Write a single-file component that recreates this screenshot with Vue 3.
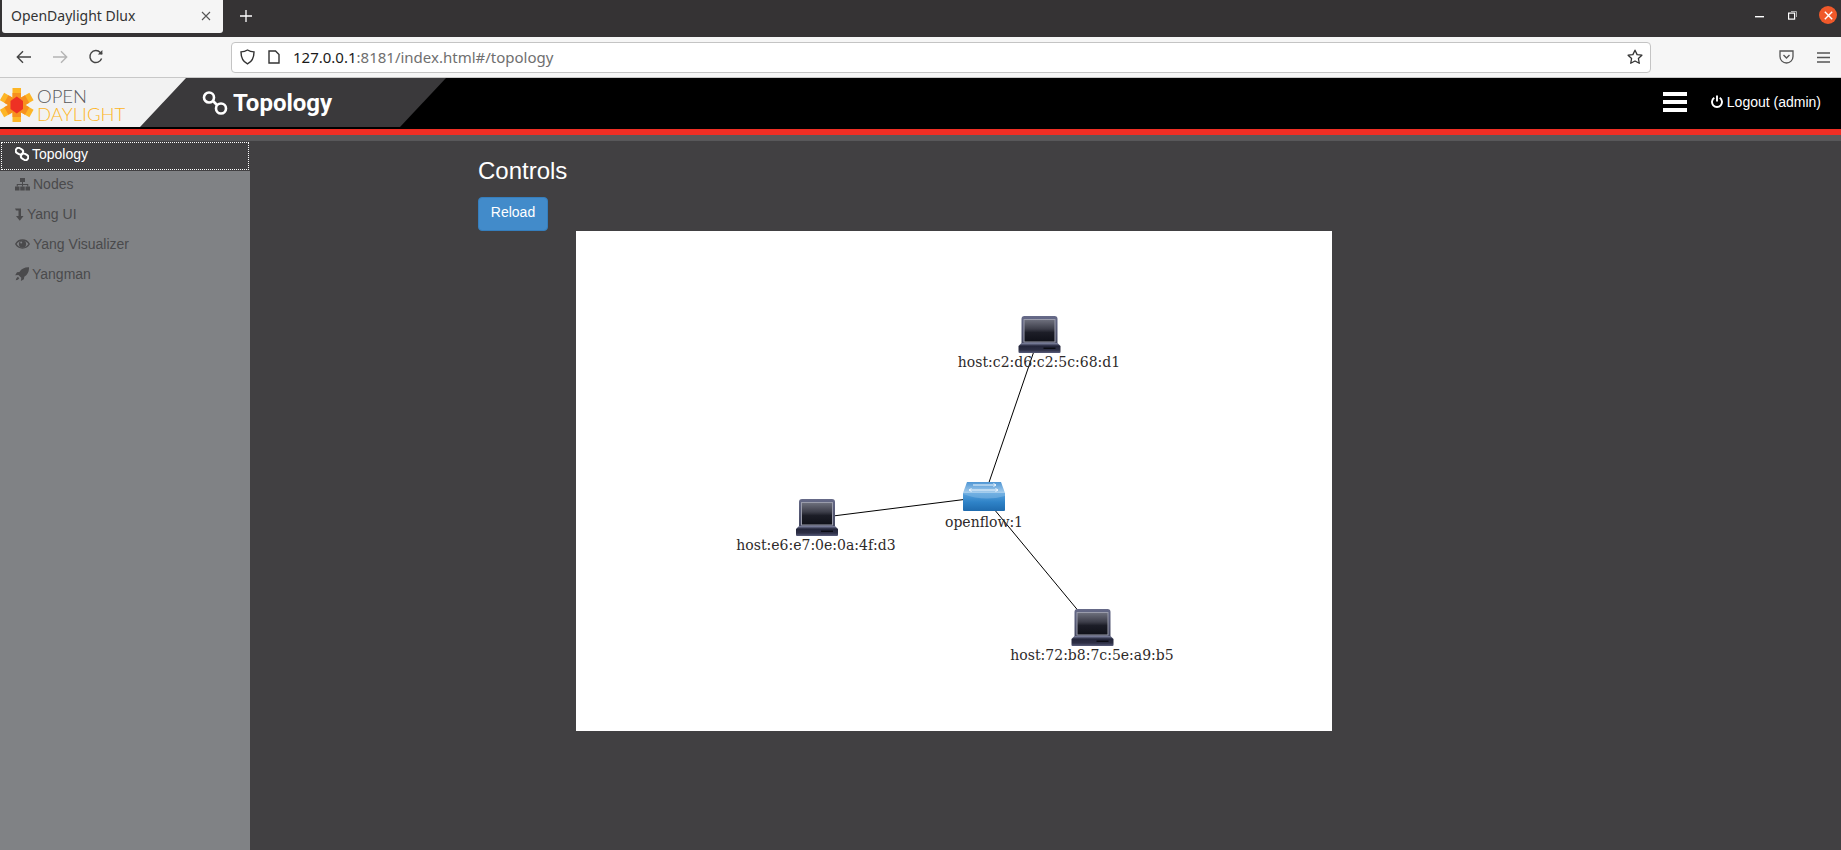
<script setup>
const menu = [
  { label: 'Topology', icon: 'link', w: 14, active: true },
  { label: 'Nodes', icon: 'sitemap', w: 15 },
  { label: 'Yang UI', icon: 'level', w: 9 },
  { label: 'Yang Visualizer', icon: 'eye', w: 15 },
  { label: 'Yangman', icon: 'rocket', w: 14 }
]
const center = { x: 984, y: 497 }
const nodes = [
  { id: 'host:c2:d6:c2:5c:68:d1', x: 463.5, y: 104, lx: 463, ly: 136 },
  { id: 'host:e6:e7:0e:0a:4f:d3', x: 241, y: 287, lx: 240, ly: 319 },
  { id: 'host:72:b8:7c:5e:a9:b5', x: 516.5, y: 397, lx: 516, ly: 429 }
]
const sw = { x: center.x - 576, y: center.y - 231 }
</script>

<template>
  <div class="page">
    <div class="tabbar">
      <div class="tab">
        <span class="tab-title">OpenDaylight Dlux</span>
        <svg class="tab-x" width="10" height="10" viewBox="0 0 10 10"><path d="M1 1l8 8M9 1l-8 8" stroke="#555" stroke-width="1.1"/></svg>
      </div>
      <svg class="new-tab" width="12" height="12" viewBox="0 0 12 12"><path d="M6 0v12M0 6h12" stroke="#fff" stroke-width="1.3"/></svg>
      <div class="winbtns">
        <svg class="w-min" width="9" height="2" viewBox="0 0 9 2"><rect width="9" height="1.4" fill="#fff"/></svg>
        <svg class="w-max" width="9" height="9" viewBox="0 0 9 9"><rect x="0.6" y="2.1" width="6" height="6" fill="none" stroke="#fff" stroke-width="1.2"/><path d="M3 .5h5.5V6" fill="none" stroke="#aaa" stroke-width="1"/></svg>
        <span class="close"><svg width="9" height="9" viewBox="0 0 9 9"><path d="M.8.8l7.4 7.4M8.2.8L.8 8.2" stroke="#fff" stroke-width="1.4"/></svg></span>
      </div>
    </div>

    <div class="toolbar">
      <svg class="nav" width="16" height="14" viewBox="0 0 16 14"><path d="M15 7H1.5M7 1.3L1.3 7 7 12.7" fill="none" stroke="#444" stroke-width="1.4"/></svg>
      <svg class="nav" width="16" height="14" viewBox="0 0 16 14"><path d="M1 7h13.5M9 1.3L14.7 7 9 12.7" fill="none" stroke="#b4b4b4" stroke-width="1.4"/></svg>
      <svg class="nav" width="16" height="16" viewBox="0 0 16 16"><path d="M13.6 9.5A6 6 0 1 1 12.3 3.4L14 5" fill="none" stroke="#444" stroke-width="1.4"/><path d="M14.4 1v4.6H9.8" fill="#444"/></svg>
      <div class="urlbar">
        <svg width="15" height="16" viewBox="0 0 15 16"><path d="M7.5 1C5.6 2.2 3.4 2.8 1 2.9c0 5.2 1.7 9.5 6.5 12 4.8-2.5 6.5-6.8 6.5-12-2.4-.1-4.6-.7-6.5-1.9z" fill="none" stroke="#333" stroke-width="1.4"/></svg>
        <svg class="pageicon" width="12" height="14" viewBox="0 0 12 14"><path d="M1 1h6.5L11 4.5V13H1z" fill="none" stroke="#333" stroke-width="1.4"/></svg>
        <span class="url"><b>127.0.0.1</b>:8181/index.html#/topology</span>
        <svg class="star" width="16" height="16" viewBox="0 0 16 16"><path d="M8 1.2l2.1 4.4 4.8.6-3.5 3.3.9 4.8L8 12l-4.300 2.300.9-4.800L1.100 6.200l4.800-.6z" fill="none" stroke="#333" stroke-width="1.3" stroke-linejoin="round"/></svg>
      </div>
      <svg class="pocket" width="15" height="14" viewBox="0 0 15 14"><path d="M1 1h13v5.500a6.500 6.500 0 0 1-13 0z" fill="none" stroke="#555" stroke-width="1.3"/><path d="M4.500 5l3 3 3-3" fill="none" stroke="#555" stroke-width="1.4"/></svg>
      <svg class="appmenu" width="13" height="11" viewBox="0 0 13 11"><path d="M0 1h13M0 5.500h13M0 10h13" stroke="#555" stroke-width="1.3"/></svg>
    </div>

    <header class="header">
      <div class="logo">
        <svg width="34" height="34" viewBox="0 0 34 34" class="flower">
          <g fill="#fdb525">
            <rect x="12.5" y="0" width="8.500" height="34"/>
            <rect x="12.500" y="0" width="8.500" height="34" transform="rotate(60 16.750 17)"/>
            <rect x="12.500" y="0" width="8.500" height="34" transform="rotate(120 16.750 17)"/>
          </g>
          <g fill="#f7901e">
            <rect x="12.500" y="5" width="8.500" height="24"/>
            <rect x="12.500" y="5" width="8.500" height="24" transform="rotate(60 16.750 17)"/>
            <rect x="12.500" y="5" width="8.500" height="24" transform="rotate(120 16.750 17)"/>
          </g>
          <path d="M16.750 8.500L23 13v8l-6.250 4.500L10.500 21v-8z" fill="#ee3124"/>
        </svg>
        <div class="logo-text"><span class="l1">OPEN</span><span class="l2">DAYLIGHT</span></div>
      </div>
      <div class="module">
        <svg width="26" height="26" viewBox="0 0 26 26"><circle cx="7" cy="7.5" r="5" fill="none" stroke="#fff" stroke-width="2.6"/><circle cx="19" cy="18.5" r="5" fill="none" stroke="#fff" stroke-width="2.6"/><path d="M11 11l4 4" stroke="#fff" stroke-width="2.6"/></svg>
        <span>Topology</span>
      </div>
      <div class="spacer"></div>
      <div class="burger"><i></i><i></i><i></i></div>
      <div class="logout">
        <svg width="12" height="13" viewBox="0 0 12 13"><path d="M3.300 2.800a5 5 0 1 0 5.400 0" fill="none" stroke="#fff" stroke-width="1.9"/><path d="M6 .5v6" stroke="#fff" stroke-width="1.9"/></svg>
        <span>Logout (admin)</span>
      </div>
    </header>
    <div class="redbar"></div>
    <div class="greybar"></div>

    <div class="body">
      <nav class="sidebar">
        <a v-for="m in menu" :key="m.label" class="item" :class="{ active: m.active }">
          <svg class="mi" :style="{ width: m.w + 'px' }" height="14" :viewBox="`0 0 ${m.w} 14`" fill="currentColor">
            <g v-if="m.icon === 'link'" fill="none" stroke="currentColor" stroke-width="2">
              <rect x="0.5" y="1.5" width="7.5" height="5.5" rx="2.7" transform="rotate(30 4.5 4.5)"/>
              <rect x="6" y="7" width="7.5" height="5.5" rx="2.7" transform="rotate(30 9.5 9.5)"/>
            </g>
            <g v-else-if="m.icon === 'sitemap'">
              <rect x="5" y="1" width="5" height="4"/><rect x="0" y="9.5" width="4.5" height="4"/><rect x="5.25" y="9.5" width="4.5" height="4"/><rect x="10.5" y="9.5" width="4.5" height="4"/>
              <path d="M7 5h1v2h5.250v2.500h-1V8H8v1.500H7V8H2.750v1.500h-1V7H7z"/>
            </g>
            <path v-else-if="m.icon === 'level'" d="M0 1.500h6v7.500h2.500l-3.700 4.700L1 9h2.500V3.500H1z"/>
            <g v-else-if="m.icon === 'eye'">
              <path d="M.8 7C2.300 4.400 4.700 3 7.500 3s5.200 1.400 6.700 4c-1.500 2.600-3.900 4-6.700 4S2.300 9.600.8 7z" fill="none" stroke="currentColor" stroke-width="1.5"/>
              <circle cx="7.5" cy="7" r="3.6"/>
              <circle cx="6.2" cy="5.6" r="1" fill="#808285"/>
            </g>
            <path v-else d="M14 .3c.2 4.200-1.300 7.300-4.700 9.500l-.4 2.400-3 1.800.4-3.200-2.900-2.900-3.200.4 1.800-3 2.400-.4C6.700 1.600 9.800.100 14 .3zM2.900 9.800C1.700 10.500 1 11.800.8 13.300c1.500-.2 2.800-.9 3.500-2.100z"/>
          </svg>
          <span>{{ m.label }}</span>
        </a>
      </nav>

      <main class="content">
        <h3>Controls</h3>
        <button class="reload">Reload</button>
        <svg class="canvas" width="756" height="500" viewBox="0 0 756 500">
          <defs>
            <linearGradient id="lapBody" x1="0" y1="0" x2="0" y2="1">
              <stop offset="0" stop-color="#666a88"/><stop offset="1" stop-color="#43465f"/>
            </linearGradient>
            <linearGradient id="lapScreen" x1="0" y1="0" x2="0" y2="1">
              <stop offset="0" stop-color="#6f717e"/><stop offset=".42" stop-color="#3d3e4a"/><stop offset=".58" stop-color="#1c1d27"/><stop offset="1" stop-color="#0f1018"/>
            </linearGradient>
            <linearGradient id="lapBase" x1="0" y1="0" x2="0" y2="1">
              <stop offset="0" stop-color="#8287a5"/><stop offset=".3" stop-color="#23253a"/><stop offset=".7" stop-color="#2d2f45"/><stop offset="1" stop-color="#575b7a"/>
            </linearGradient>
            <linearGradient id="swTop" x1="0" y1="0" x2="0" y2="1">
              <stop offset="0" stop-color="#4f96d4"/><stop offset="1" stop-color="#a8cfee"/>
            </linearGradient>
            <linearGradient id="swFront" x1="0" y1="0" x2="0" y2="1">
              <stop offset="0" stop-color="#5ba3dd"/><stop offset=".5" stop-color="#2f83c8"/><stop offset="1" stop-color="#1f6bae"/>
            </linearGradient>
            <g id="laptop">
              <path d="M-18 -16a3 3 0 0 1 3-3H15a3 3 0 0 1 3 3V9H-18z" fill="url(#lapBody)"/>
              <rect x="-15.5" y="-15.5" width="31" height="22.5" fill="url(#lapScreen)" stroke="#9a9cab" stroke-width="1"/>
              <path d="M-18 8H18L21 11V17a1 1 0 0 1-1 1H-20a1 1 0 0 1-1-1V11z" fill="url(#lapBase)"/>
              <rect x="4" y="12.5" width="12" height="1.5" fill="#0b0c14"/>
            </g>
            <g id="switch">
              <path d="M-17 -15H17L21 -4H-21z" fill="url(#swTop)"/>
              <path d="M-21 -4H21V13a1 1 0 0 1-1 1H-20a1 1 0 0 1-1-1z" fill="url(#swFront)"/>
              <path d="M-21 -3Q0 5 21 -1V-4H-21z" fill="#8fc0e8" opacity=".45"/>
              <path d="M-11 -12H12M12 -12l-2.500-1.500M12 -12l-2.500 1.500M-15 -7H14M14 -7l-2.500-1.500M14 -7l-2.500 1.500M-15 -7l2.500-1.500M-15 -7l2.500 1.500" stroke="#eef6fd" stroke-width="1" fill="none"/>
            </g>
          </defs>
          <line v-for="n in nodes" :key="'e' + n.id" :x1="sw.x" :y1="sw.y" :x2="n.x" :y2="n.y" stroke="#000" stroke-width="1"/>
          <use href="#switch" :x="sw.x" :y="sw.y"/>
          <text class="lbl" :x="sw.x" y="296" text-anchor="middle">openflow:1</text>
          <g v-for="n in nodes" :key="n.id">
            <use href="#laptop" :x="n.x" :y="n.y"/>
            <text class="lbl" :x="n.lx" :y="n.ly" text-anchor="middle">{{ n.id }}</text>
          </g>
        </svg>
      </main>
    </div>
  </div>
</template>

<style scoped>
.page {
  width: 1841px;
  height: 850px;
  overflow: hidden;
  display: flex;
  flex-direction: column;
  background: #414042;
  font-family: "Liberation Sans", Arial, sans-serif;
  font-size: 14px;
}
.tabbar {
  height: 37px;
  flex: none;
  background: #353334;
  display: flex;
  align-items: flex-start;
}
.tab {
  margin-left: 2px;
  width: 221px;
  height: 33px;
  background: #f5f5f5;
  border-radius: 0 0 3px 3px;
  display: flex;
  align-items: center;
  justify-content: space-between;
  padding: 0 12px 2px 9px;
  box-sizing: border-box;
  font-family: "Noto Sans", sans-serif;
  font-size: 14px;
  color: #333;
}
.new-tab { margin: 10px 0 0 17px; }
.winbtns {
  margin-left: auto;
  height: 30px;
  display: flex;
  align-items: center;
  padding-right: 4px;
}
.w-min { margin-right: 24px; margin-top: 4px; }
.w-max { margin-right: 22px; }
.close {
  width: 18px;
  height: 18px;
  border-radius: 50%;
  background: #f0592a;
  display: flex;
  align-items: center;
  justify-content: center;
}
.toolbar {
  height: 41px;
  flex: none;
  box-sizing: border-box;
  background: #f6f6f6;
  border-bottom: 1px solid #c8c8c8;
  display: flex;
  align-items: center;
}
.nav { margin-left: 20px; flex: none; }
.nav:first-child { margin-left: 16px; }
.urlbar {
  margin-left: 127px;
  width: 1420px;
  height: 31px;
  box-sizing: border-box;
  background: #fff;
  border: 1px solid #c4c4c4;
  border-radius: 4px;
  display: flex;
  align-items: center;
  padding-left: 8px;
}
.pageicon { margin-left: 13px; }
.url {
  margin-left: 13px;
  font-family: "Noto Sans", sans-serif;
  font-size: 15px;
  color: #6f6f6f;
}
.url b { font-weight: 400; color: #1a1a1a; }
.star { margin-left: auto; margin-right: 7px; }
.pocket { margin-left: 128px; }
.appmenu { margin-left: 23px; }

.header {
  height: 51px;
  flex: none;
  background: #000;
  display: flex;
  align-items: flex-start;
}
.logo {
  width: 187px;
  height: 49px;
  box-sizing: border-box;
  padding-top: 4px;
  background: #f2f2f2;
  clip-path: polygon(0 0, 100% 0, 141px 100%, 0 100%);
  display: flex;
  align-items: center;
  flex: none;
}
.flower { flex: none; }
.logo-text {
  margin-left: 3px;
  display: flex;
  flex-direction: column;
  font-family: Lato, sans-serif;
  font-weight: 300;
  line-height: 18px;
  font-size: 18.5px;
}
.l1 { color: #58595b; }
.l2 { color: #fdb525; }
.module {
  margin-left: -47px;
  width: 306px;
  height: 49px;
  flex: none;
  background: #3a393b;
  clip-path: polygon(46px 0, 100% 0, 260px 100%, 0 100%);
  display: flex;
  align-items: center;
  gap: 5px;
  box-sizing: border-box;
  padding-left: 62px;
  color: #fff;
  font-family: Roboto, sans-serif;
  font-weight: 700;
  font-size: 24px;
}
.module svg { flex: none; }
.spacer { flex: 1; }
.burger {
  margin-top: 14px;
  width: 24px;
  display: flex;
  flex-direction: column;
  gap: 4px;
}
.burger i {
  display: block;
  height: 4px;
  background: #fff;
}
.logout {
  height: 49px;
  margin-left: 24px;
  margin-right: 20px;
  display: flex;
  align-items: center;
  gap: 4px;
  color: #fff;
  margin-top: -1px;
}
.redbar { height: 6px; flex: none; background: #ee2e24; }
.greybar { height: 6px; flex: none; background: #58585a; }
.body {
  flex: 1;
  display: flex;
  min-height: 0;
}
.sidebar {
  width: 250px;
  flex: none;
  background: #808285;
}
.item {
  height: 30px;
  box-sizing: border-box;
  padding: 0 0 5px 15px;
  display: flex;
  align-items: center;
  gap: 3px;
  color: #4a4a4c;
}
.item.active {
  background: #414042;
  color: #fff;
  outline: 1px dotted #fff;
  outline-offset: -2px;
}
.mi { flex: none; }
.content {
  flex: 1;
  padding-left: 228px;
  color: #fff;
}
h3 {
  margin: 17px 0 12.6px;
  font-size: 24px;
  line-height: 26.4px;
  font-weight: 400;
}
.reload {
  display: block;
  width: 70px;
  height: 34px;
  box-sizing: border-box;
  padding: 0 0 5px;
  background: #428bca;
  border: 1px solid #357ebd;
  border-radius: 4px;
  color: #fff;
  font: 14px "Liberation Sans", Arial, sans-serif;
}
.canvas {
  display: block;
  margin-left: 98px;
  background: #fff;
}
.lbl {
  font-family: "DejaVu Serif", serif;
  font-size: 14px;
  fill: #2e2a2a;
}
</style>
